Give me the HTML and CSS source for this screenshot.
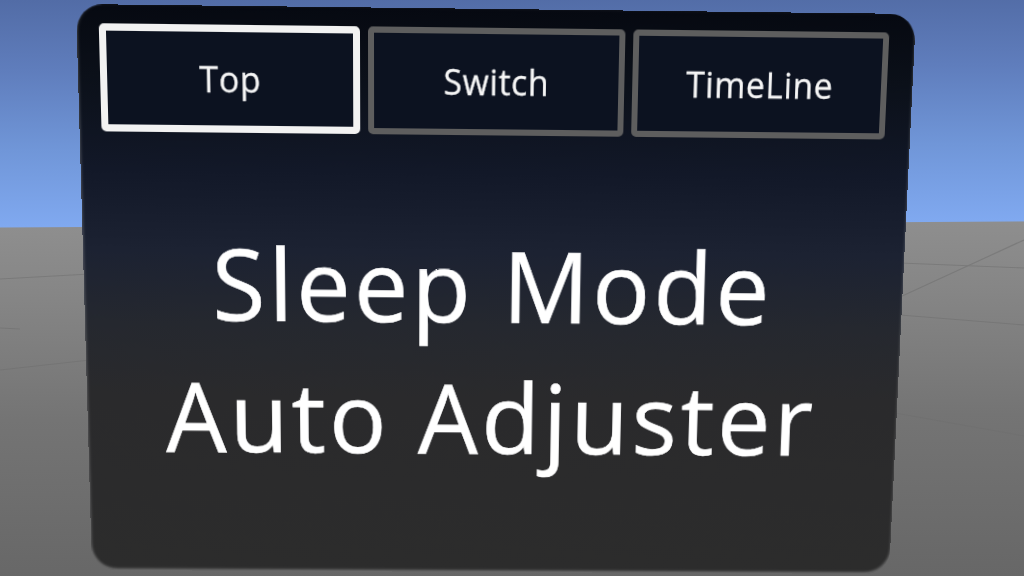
FILE: index.html
```html
<!DOCTYPE html>
<html lang="en">
<head>
<meta charset="utf-8">
<title>Sleep Mode Auto Adjuster</title>
<link rel="stylesheet" href="styles.css">
</head>
<body>
  <main class="scene">
    <!-- faint grid seams on the ground plane -->
    <svg class="ground-grid" width="1024" height="576" viewBox="0 0 1024 576" aria-hidden="true">
      <g stroke="#6f6f6f" stroke-width="1.2" fill="none" opacity="0.55">
        <line x1="0" y1="279" x2="90" y2="274"/>
        <line x1="0" y1="370" x2="90" y2="360"/>
        <line x1="0" y1="328" x2="20" y2="329"/>
        <line x1="900" y1="263" x2="1024" y2="268"/>
        <line x1="900" y1="297" x2="1024" y2="240"/>
        <line x1="900" y1="315" x2="1024" y2="325"/>
        <line x1="895" y1="413" x2="1024" y2="436"/>
      </g>
    </svg>
    <section class="panel">
      <nav class="tabs">
        <button class="tab tab-active">Top</button>
        <button class="tab">Switch</button>
        <button class="tab">TimeLine</button>
      </nav>
      <div class="title-area">
        <h1 class="title">Sleep Mode<br>Auto Adjuster</h1>
      </div>
    </section>
  </main>
</body>
</html>
```

FILE: styles.css
```css
html, body {
  margin: 0;
  padding: 0;
  width: 1024px;
  height: 576px;
  overflow: hidden;
}

body {
  font-family: "Open Sans", "Noto Sans", sans-serif;
}

/* sky above, grey ground plane below, horizon slightly tilted */
.scene {
  position: relative;
  width: 1024px;
  height: 576px;
  background: linear-gradient(179.66deg,
    #526ca6 0px,
    #5f7dbc 70px,
    #7096d8 150px,
    #80a9f0 227px,
    #8e8e8e 228px,
    #858585 300px,
    #747474 420px,
    #676767 582px);
}

.ground-grid {
  position: absolute;
  left: 0;
  top: 0;
}

/* world-space panel, projected with a perspective matrix */
.panel {
  position: relative;
  box-sizing: border-box;
  width: 840px;
  height: 566px;
  display: flex;
  flex-direction: column;
  padding: 18px 26px 0 22px;
  border-radius: 26px;
  background: linear-gradient(180deg,
    #060911 0%,
    #0b1019 12%,
    #121828 28%,
    #1c2232 42%,
    #25282f 55%,
    #2a2a2c 68%,
    #2c2c2c 100%);
  box-shadow: inset 0 -2px 3px rgba(220, 220, 220, 0.35),
              inset 2px 0 3px rgba(200, 200, 200, 0.08);
  transform-origin: 0 0;
  transform: matrix3d(1.011261, 0.012077, 0, 0.00001229,
                      0.037095, 1.054686, 0, 0.00009594,
                      0, 0, 1, 0,
                      76, 4, 0, 1);
}

.tabs {
  display: flex;
  gap: 8px;
  height: 104px;
}

.tab {
  flex: 1;
  box-sizing: border-box;
  border: 6px solid #5e5e5e;
  border-radius: 5px;
  background: #0c1220;
  color: #f6f6f6;
  font-family: "Open Sans", "Noto Sans", sans-serif;
  font-size: 34px;
  letter-spacing: 0.6px;
  padding: 0;
  cursor: pointer;
  -webkit-text-stroke: 0.3px #f6f6f6;
}

.tab-active {
  border: 7px solid #f2f2f2;
}

.title-area {
  flex: 1;
  display: flex;
  align-items: center;
  justify-content: center;
}

.title {
  margin: 0 0 14px 0;
  color: #ffffff;
  font-weight: 400;
  font-size: 99px;
  line-height: 134px;
  letter-spacing: 3.4px;
  text-align: center;
  -webkit-text-stroke: 0.6px #ffffff;
}
```
